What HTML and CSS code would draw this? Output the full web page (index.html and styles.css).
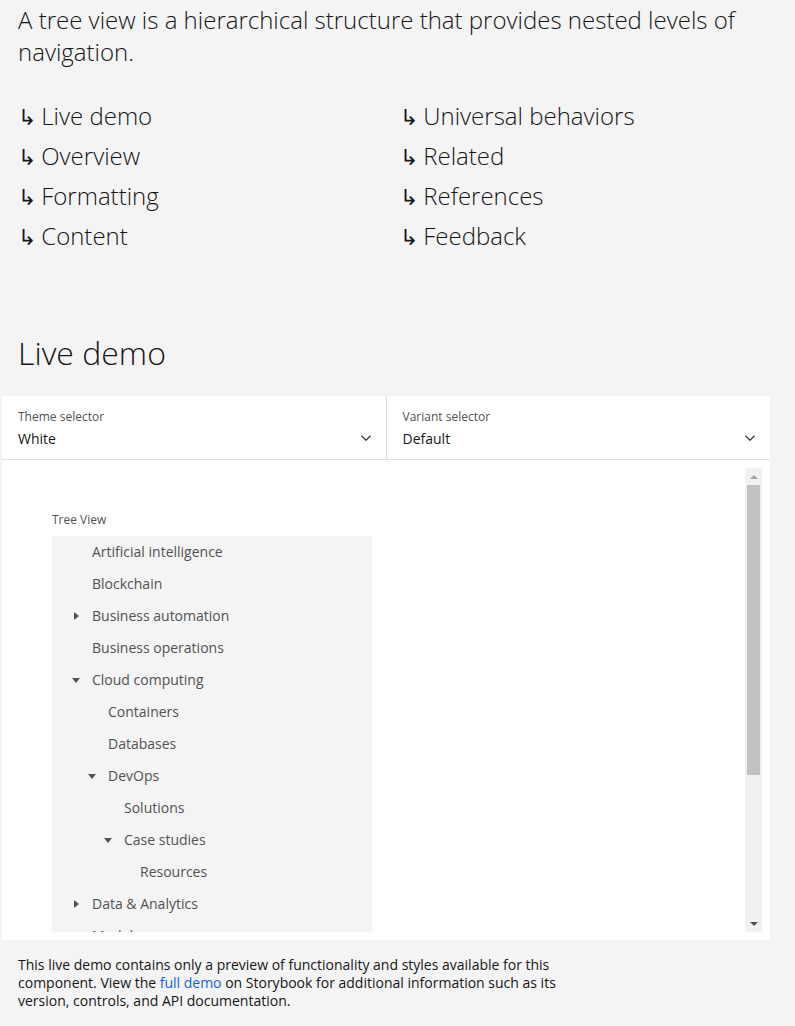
FILE: index.html
```html
<!DOCTYPE html>
<html lang="en">
<head>
<meta charset="utf-8">
<title>Tree view</title>
<link rel="stylesheet" href="styles.css">
</head>
<body>
<main class="page">
  <p class="intro">A tree view is a hierarchical structure that provides nested levels of navigation.</p>

  <ul class="anchors">
    <li><a href="#"><span class="arrow">↳</span> Live demo</a></li>
    <li><a href="#"><span class="arrow">↳</span> Overview</a></li>
    <li><a href="#"><span class="arrow">↳</span> Formatting</a></li>
    <li><a href="#"><span class="arrow">↳</span> Content</a></li>
    <li><a href="#"><span class="arrow">↳</span> Universal behaviors</a></li>
    <li><a href="#"><span class="arrow">↳</span> Related</a></li>
    <li><a href="#"><span class="arrow">↳</span> References</a></li>
    <li><a href="#"><span class="arrow">↳</span> Feedback</a></li>
  </ul>

  <h2 class="section-title">Live demo</h2>

  <section class="demo">
    <div class="selectors">
      <div class="selector">
        <div class="selector-text">
          <span class="selector-label">Theme selector</span>
          <span class="selector-value">White</span>
        </div>
        <svg class="chevron" viewBox="0 0 16 16" width="16" height="16"><path d="M8 11L3 6l.7-.7L8 9.6l4.3-4.3.7.7z"/></svg>
      </div>
      <div class="selector">
        <div class="selector-text">
          <span class="selector-label">Variant selector</span>
          <span class="selector-value">Default</span>
        </div>
        <svg class="chevron" viewBox="0 0 16 16" width="16" height="16"><path d="M8 11L3 6l.7-.7L8 9.6l4.3-4.3.7.7z"/></svg>
      </div>
    </div>

    <div class="demo-body">
      <div class="viewport">
        <div class="canvas">
          <div class="tree-label">Tree View</div>
          <ul class="tree">
            <li class="node lvl1 leaf">Artificial intelligence</li>
            <li class="node lvl1 leaf">Blockchain</li>
            <li class="node lvl1"><svg class="caret" viewBox="0 0 16 16"><path d="M6 4l5 4-5 4z"/></svg>Business automation</li>
            <li class="node lvl1 leaf">Business operations</li>
            <li class="node lvl1"><svg class="caret" viewBox="0 0 16 16"><path d="M4 6h8l-4 5z"/></svg>Cloud computing</li>
            <li class="node lvl2 leaf">Containers</li>
            <li class="node lvl2 leaf">Databases</li>
            <li class="node lvl2"><svg class="caret" viewBox="0 0 16 16"><path d="M4 6h8l-4 5z"/></svg>DevOps</li>
            <li class="node lvl3 leaf">Solutions</li>
            <li class="node lvl3"><svg class="caret" viewBox="0 0 16 16"><path d="M4 6h8l-4 5z"/></svg>Case studies</li>
            <li class="node lvl4 leaf">Resources</li>
            <li class="node lvl1"><svg class="caret" viewBox="0 0 16 16"><path d="M6 4l5 4-5 4z"/></svg>Data &amp; Analytics</li>
            <li class="node lvl1 leaf">Models</li>
            <li class="node lvl1 leaf">Security</li>
          </ul>
        </div>
        <div class="scrollbar">
          <div class="sb-btn"><span class="sb-up"></span></div>
          <div class="sb-track"><div class="sb-thumb"></div></div>
          <div class="sb-btn"><span class="sb-down"></span></div>
        </div>
      </div>
    </div>
  </section>

  <p class="note">This live demo contains only a preview of functionality and styles available for this component. View the <a href="#">full demo</a> on Storybook for additional information such as its version, controls, and API documentation.</p>
</main>
</body>
</html>
```

FILE: styles.css
```css
* { box-sizing: border-box; }

html, body {
  margin: 0;
  padding: 0;
  background: #f4f4f4;
}

body {
  font-family: "Open Sans", "Liberation Sans", sans-serif;
  color: #161616;
}

.page {
  padding-top: 4px;
  width: 795px;
  height: 1026px;
  overflow: hidden;
}

.intro {
  margin: 0;
  padding-left: 18px;
  width: 760px;
  font-size: 24px;
  line-height: 32px;
  font-weight: 300;
}

.anchors {
  list-style: none;
  margin: 28px 0 0 0;
  padding: 0 0 0 18px;
  display: grid;
  grid-template-columns: 382px 382px;
  grid-template-rows: repeat(4, 40px);
  grid-auto-flow: column;
}

.anchors li {
  display: flex;
  align-items: center;
}

.anchors a {
  color: #161616;
  text-decoration: none;
  font-size: 24px;
  line-height: 32px;
  font-weight: 300;
}

.arrow {
  font-family: "DejaVu Sans", sans-serif;
  font-size: 22px;
  line-height: 1;
  margin-right: -1px;
}

.section-title {
  margin: 77px 0 0 0;
  padding-left: 18px;
  font-size: 32px;
  line-height: 40px;
  font-weight: 300;
}

.demo {
  margin: 23px 0 0 2px;
  width: 768px;
  background: #ffffff;
}

.selectors {
  display: flex;
  border-bottom: 1px solid #e0e0e0;
}

.selector {
  flex: 1;
  display: flex;
  align-items: flex-end;
  justify-content: space-between;
  padding: 13px 12px 12px 16px;
}

.selector + .selector {
  border-left: 1px solid #e0e0e0;
}

.selector-text {
  display: flex;
  flex-direction: column;
  gap: 4px;
}

.selector-label {
  font-size: 12px;
  line-height: 16px;
  color: #525252;
}

.selector-value {
  font-size: 14px;
  line-height: 18px;
  color: #161616;
  padding-top: 1px;
  margin-bottom: -1px;
}

.chevron {
  fill: #161616;
  margin-bottom: 1px;
}

.demo-body {
  padding: 8px;
}

.viewport {
  display: flex;
  height: 464px;
}

.canvas {
  flex: 1;
  overflow: hidden;
  padding: 44px 0 0 42px;
}

.tree-label {
  font-size: 12px;
  line-height: 16px;
  color: #525252;
  margin-bottom: 8px;
}

.tree {
  list-style: none;
  margin: 0;
  padding: 0;
  width: 320px;
  background: #f4f4f4;
}

.node {
  display: flex;
  align-items: center;
  height: 32px;
  font-size: 14px;
  line-height: 18px;
  color: #525252;
}

.caret {
  width: 16px;
  height: 16px;
  fill: #525252;
  margin-right: 8px;
  flex: none;
}

.lvl1 { padding-left: 16px; }
.lvl2 { padding-left: 32px; }
.lvl3 { padding-left: 48px; }
.lvl4 { padding-left: 64px; }
.leaf.lvl1 { padding-left: 40px; }
.leaf.lvl2 { padding-left: 56px; }
.leaf.lvl3 { padding-left: 72px; }
.leaf.lvl4 { padding-left: 88px; }

.scrollbar {
  width: 17px;
  flex: none;
  display: flex;
  flex-direction: column;
  background: #f1f1f1;
}

.sb-btn {
  height: 17px;
  display: flex;
  align-items: center;
  justify-content: center;
}

.sb-up {
  width: 0;
  height: 0;
  border-left: 4px solid transparent;
  border-right: 4px solid transparent;
  border-bottom: 4px solid #a3a3a3;
}

.sb-down {
  width: 0;
  height: 0;
  border-left: 4px solid transparent;
  border-right: 4px solid transparent;
  border-top: 4px solid #505050;
}

.sb-track {
  flex: 1;
  padding: 0 2px;
}

.sb-thumb {
  height: 290px;
  background: #c1c1c1;
}

.note {
  margin: 16px 0 0 0;
  padding-left: 18px;
  width: 563px;
  font-size: 14px;
  line-height: 18px;
  color: #161616;
}

.note a {
  color: #0f62fe;
  text-decoration: none;
}
```
